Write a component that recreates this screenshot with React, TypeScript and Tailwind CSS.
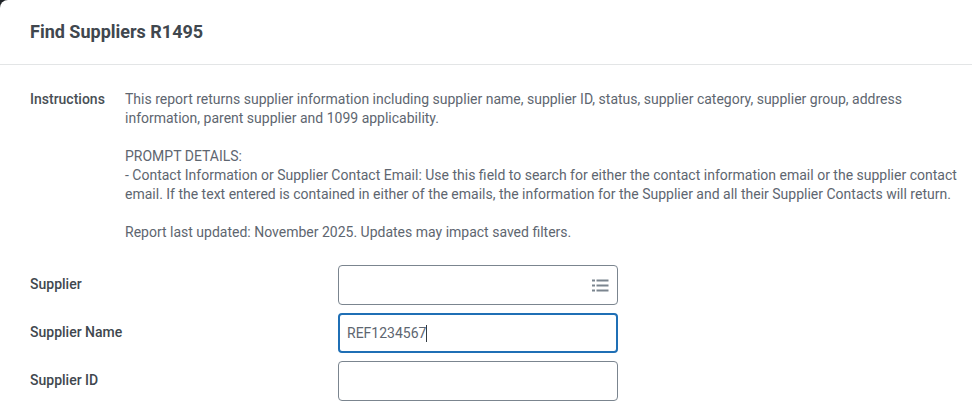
import React from 'react';

const FieldRow = ({ label, children }: { label: string; children: React.ReactNode }) => (
  <div className="flex items-center h-10">
    <label className="w-[308px] shrink-0 pb-0.5 text-[14px] font-medium text-[#40474e]">{label}</label>
    {children}
  </div>
);

const ListIcon = () => (
  <svg width="17" height="13" viewBox="0 0 17 13" fill="#7b858f">
    <rect x="0" y="0.5" width="3" height="2" />
    <rect x="4.5" y="0.5" width="12" height="2" />
    <rect x="0" y="5.5" width="3" height="2" />
    <rect x="4.5" y="5.5" width="12" height="2" />
    <rect x="0" y="10.5" width="3" height="2" />
    <rect x="4.5" y="10.5" width="12" height="2" />
  </svg>
);

export default function App() {
  return (
    <div className="relative w-[972px] h-[405px] overflow-hidden bg-white font-['Roboto',sans-serif] text-[#5e6670]">
      {/* dark corner behind the rounded page */}
      <div className="absolute left-0 top-0 w-2 h-2 bg-[#1f2328]">
        <div className="w-2 h-2 bg-white rounded-tl-lg" />
      </div>

      <div className="h-[65px] border-b border-[#e3e5e6] pl-[30px] pt-[20px]">
        <h1 className="text-[18px] leading-6 font-bold text-[#40474e]">Find Suppliers R1495</h1>
      </div>

      <div className="flex pl-[30px] pt-[25px]">
        <div className="w-[95px] shrink-0 text-[14px] leading-[19px] font-medium text-[#494f55]">Instructions</div>
        <div className="text-[14px] leading-[19px] w-[840px]">
          <p>
            This report returns supplier information including supplier name, supplier ID, status, supplier category, supplier group, address
            <br />
            information, parent supplier and 1099 applicability.
          </p>
          <p className="mt-[19px]">
            PROMPT DETAILS:
            <br />- Contact Information or Supplier Contact Email: Use this field to search for either the contact information email or the supplier contact
            <br />
            email. If the text entered is contained in either of the emails, the information for the Supplier and all their Supplier Contacts will return.
          </p>
          <p className="mt-[19px]">Report last updated: November 2025. Updates may impact saved filters.</p>
        </div>
      </div>

      <div className="flex flex-col gap-2 pl-[30px] pt-[23px]">
        <FieldRow label="Supplier">
          <div className="flex items-center justify-end w-[280px] h-10 pr-2 border border-[#7b858f] rounded-[4px]">
            <ListIcon />
          </div>
        </FieldRow>
        <FieldRow label="Supplier Name">
          <div className="flex items-center w-[280px] h-10 pl-[7px] border-2 border-[#1f6fb5] rounded-[4px] text-[14px]">
            <span>REF1234567</span>
            <span className="w-px h-[17px] bg-[#333b42]" />
          </div>
        </FieldRow>
        <FieldRow label="Supplier ID">
          <div className="w-[280px] h-10 border border-[#7b858f] rounded-[4px]" />
        </FieldRow>
      </div>
    </div>
  );
}
